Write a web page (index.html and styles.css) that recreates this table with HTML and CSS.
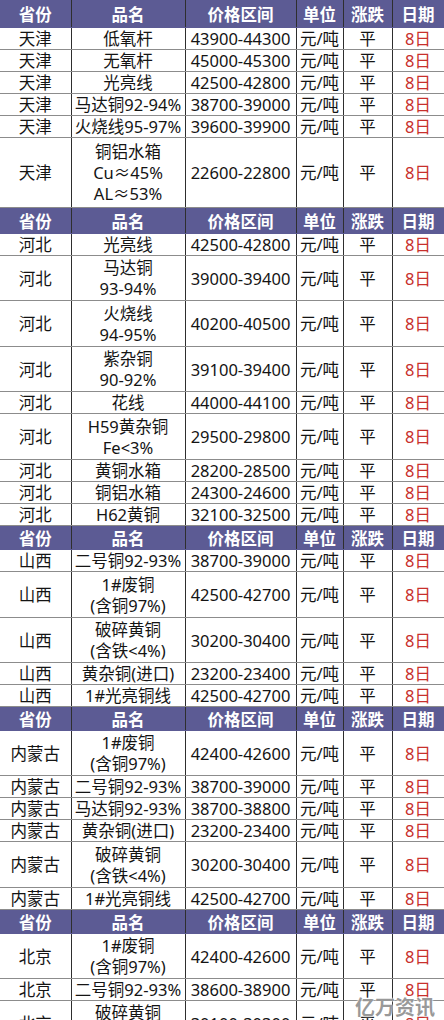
FILE: index.html
```html
<!DOCTYPE html>
<html lang="zh-CN">
<head>
<meta charset="utf-8">
<title>铜价表</title>
<link rel="stylesheet" href="styles.css">
</head>
<body>
<div class="page">
<table class="price-table">
  <colgroup>
    <col class="c-prov"><col class="c-name"><col class="c-price"><col class="c-unit"><col class="c-chg"><col class="c-date">
  </colgroup>
  <tbody>
    <tr class="head h27"><td>省份</td><td>品名</td><td>价格区间</td><td>单位</td><td>涨跌</td><td>日期</td></tr>
    <tr class="h20"><td>天津</td><td>低氧杆</td><td>43900-44300</td><td>元/吨</td><td>平</td><td class="date">8日</td></tr>
    <tr class="h21"><td>天津</td><td>无氧杆</td><td>45000-45300</td><td>元/吨</td><td>平</td><td class="date">8日</td></tr>
    <tr class="h21"><td>天津</td><td>光亮线</td><td>42500-42800</td><td>元/吨</td><td>平</td><td class="date">8日</td></tr>
    <tr class="h21"><td>天津</td><td>马达铜92-94%</td><td>38700-39000</td><td>元/吨</td><td>平</td><td class="date">8日</td></tr>
    <tr class="h20"><td>天津</td><td>火烧线95-97%</td><td>39600-39900</td><td>元/吨</td><td>平</td><td class="date">8日</td></tr>
    <tr class="h70"><td>天津</td><td>铜铝水箱<br>Cu≈45%<br>AL≈53%</td><td>22600-22800</td><td>元/吨</td><td>平</td><td class="date">8日</td></tr>

    <tr class="head h26"><td>省份</td><td>品名</td><td>价格区间</td><td>单位</td><td>涨跌</td><td>日期</td></tr>
    <tr class="h22"><td>河北</td><td>光亮线</td><td>42500-42800</td><td>元/吨</td><td>平</td><td class="date">8日</td></tr>
    <tr class="h45"><td>河北</td><td>马达铜<br>93-94%</td><td>39000-39400</td><td>元/吨</td><td>平</td><td class="date">8日</td></tr>
    <tr class="h46"><td>河北</td><td>火烧线<br>94-95%</td><td>40200-40500</td><td>元/吨</td><td>平</td><td class="date">8日</td></tr>
    <tr class="h45"><td>河北</td><td>紫杂铜<br>90-92%</td><td>39100-39400</td><td>元/吨</td><td>平</td><td class="date">8日</td></tr>
    <tr class="h21"><td>河北</td><td>花线</td><td>44000-44100</td><td>元/吨</td><td>平</td><td class="date">8日</td></tr>
    <tr class="h46"><td>河北</td><td>H59黄杂铜<br>Fe&lt;3%</td><td>29500-29800</td><td>元/吨</td><td>平</td><td class="date">8日</td></tr>
    <tr class="h21"><td>河北</td><td>黄铜水箱</td><td>28200-28500</td><td>元/吨</td><td>平</td><td class="date">8日</td></tr>
    <tr class="h21"><td>河北</td><td>铜铝水箱</td><td>24300-24600</td><td>元/吨</td><td>平</td><td class="date">8日</td></tr>
    <tr class="h22"><td>河北</td><td>H62黄铜</td><td>32100-32500</td><td>元/吨</td><td>平</td><td class="date">8日</td></tr>

    <tr class="head h24"><td>省份</td><td>品名</td><td>价格区间</td><td>单位</td><td>涨跌</td><td>日期</td></tr>
    <tr class="h22"><td>山西</td><td>二号铜92-93%</td><td>38700-39000</td><td>元/吨</td><td>平</td><td class="date">8日</td></tr>
    <tr class="h46"><td>山西</td><td>1#废铜<br>(含铜97%)</td><td>42500-42700</td><td>元/吨</td><td>平</td><td class="date">8日</td></tr>
    <tr class="h45"><td>山西</td><td>破碎黄铜<br>(含铁&lt;4%)</td><td>30200-30400</td><td>元/吨</td><td>平</td><td class="date">8日</td></tr>
    <tr class="h22"><td>山西</td><td>黄杂铜(进口)</td><td>23200-23400</td><td>元/吨</td><td>平</td><td class="date">8日</td></tr>
    <tr class="h22"><td>山西</td><td>1#光亮铜线</td><td>42500-42700</td><td>元/吨</td><td>平</td><td class="date">8日</td></tr>

    <tr class="head h24"><td>省份</td><td>品名</td><td>价格区间</td><td>单位</td><td>涨跌</td><td>日期</td></tr>
    <tr class="h45"><td>内蒙古</td><td>1#废铜<br>(含铜97%)</td><td>42400-42600</td><td>元/吨</td><td>平</td><td class="date">8日</td></tr>
    <tr class="h22"><td>内蒙古</td><td>二号铜92-93%</td><td>38700-39000</td><td>元/吨</td><td>平</td><td class="date">8日</td></tr>
    <tr class="h22"><td>内蒙古</td><td>马达铜92-93%</td><td>38700-38800</td><td>元/吨</td><td>平</td><td class="date">8日</td></tr>
    <tr class="h22"><td>内蒙古</td><td>黄杂铜(进口)</td><td>23200-23400</td><td>元/吨</td><td>平</td><td class="date">8日</td></tr>
    <tr class="h46"><td>内蒙古</td><td>破碎黄铜<br>(含铁&lt;4%)</td><td>30200-30400</td><td>元/吨</td><td>平</td><td class="date">8日</td></tr>
    <tr class="h22"><td>内蒙古</td><td>1#光亮铜线</td><td>42500-42700</td><td>元/吨</td><td>平</td><td class="date">8日</td></tr>

    <tr class="head h24"><td>省份</td><td>品名</td><td>价格区间</td><td>单位</td><td>涨跌</td><td>日期</td></tr>
    <tr class="h45"><td>北京</td><td>1#废铜<br>(含铜97%)</td><td>42400-42600</td><td>元/吨</td><td>平</td><td class="date">8日</td></tr>
    <tr class="h22"><td>北京</td><td>二号铜92-93%</td><td>38600-38900</td><td>元/吨</td><td>平</td><td class="date">8日</td></tr>
    <tr class="h45"><td>北京</td><td>破碎黄铜<br>(含铁&lt;4%)</td><td>30100-30300</td><td>元/吨</td><td>平</td><td class="date">8日</td></tr>
  </tbody>
</table>
<div class="watermark">亿万资讯</div>
</div>
</body>
</html>
```

FILE: styles.css
```css
html, body {
  margin: 0;
  padding: 0;
  background: #ffffff;
}

.page {
  position: relative;
  width: 444px;
  height: 1020px;
  overflow: hidden;
}

.price-table {
  width: 444px;
  table-layout: fixed;
  border-collapse: collapse;
  font-family: "Noto Sans", "Noto Sans CJK SC", sans-serif;
  font-size: 16.5px;
  color: #141414;
}

.c-prov { width: 71px; }
.c-name { width: 114px; }
.c-price { width: 111px; }
.c-unit { width: 47px; }
.c-chg { width: 49px; }
.c-date { width: 52px; }

.price-table td {
  padding: 0;
  text-align: center;
  vertical-align: middle;
  line-height: 21px;
  white-space: nowrap;
  border-top: 1px solid #8c8c8c;
  border-bottom: 1px solid #8c8c8c;
  border-left: 1px solid #2e2e2e;
  border-right: 1px solid #2e2e2e;
  overflow: hidden;
}

.price-table tr td:first-child {
  border-left: none;
}

.price-table .date {
  color: #c8302c;
}

.price-table .head td {
  background: #5c5b94;
  color: #ffffff;
  font-weight: 700;
  font-family: "Noto Sans CJK SC", sans-serif;
  font-size: 16.5px;
  border-top: 1px solid #5c5b94;
  border-bottom: 1px solid #5c5b94;
  line-height: 20px;
}

.h20 td { height: 19px; }
.h21 td { height: 20px; }
.h22 td { height: 21px; }
.h24 td { height: 23px; }
.h26 td { height: 25px; }
.h27 td { height: 26px; }
.h45 td { height: 44px; }
.h46 td { height: 45px; }
.h70 td { height: 69px; }

.watermark {
  position: absolute;
  left: 355px;
  top: 992px;
  font-family: "Noto Sans CJK SC", sans-serif;
  font-weight: 700;
  font-size: 20px;
  color: rgba(120, 120, 120, 0.75);
  text-shadow: 0 0 2px #ffffff, 0 0 2px #ffffff;
}
```
